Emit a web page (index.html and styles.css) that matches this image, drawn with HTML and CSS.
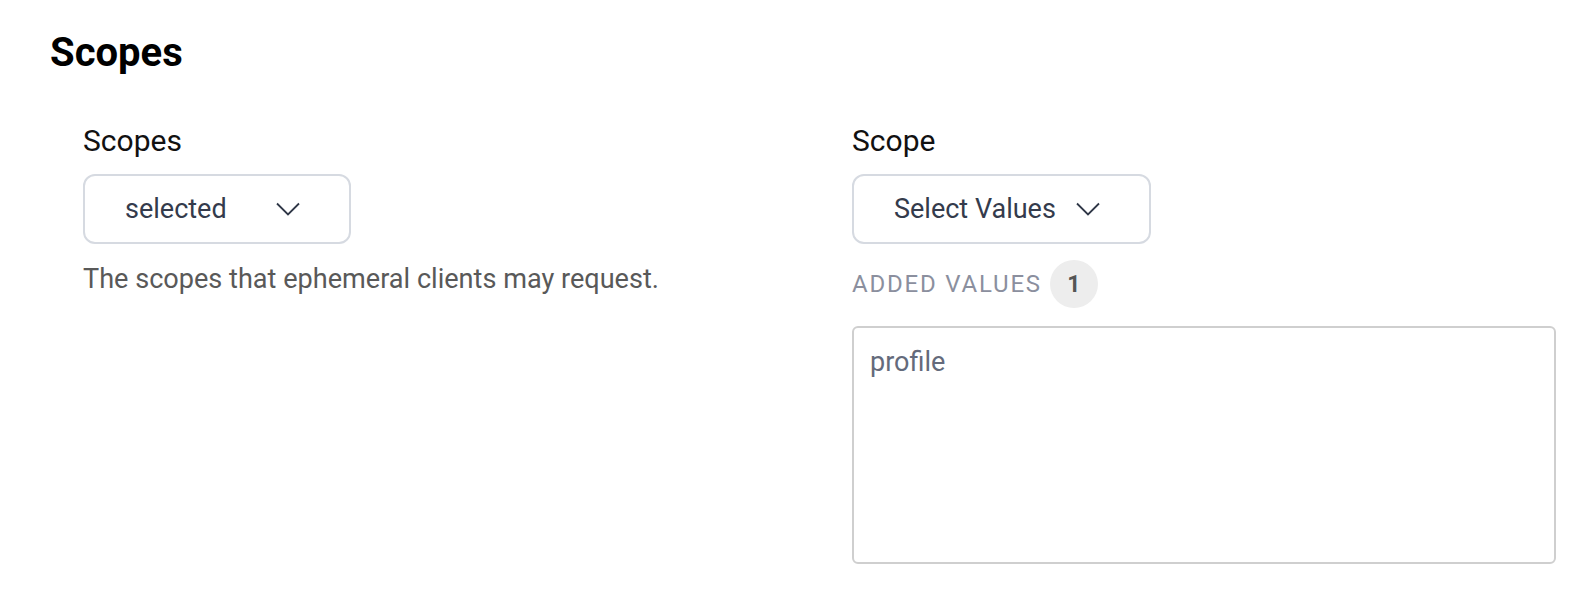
FILE: index.html
```html
<!DOCTYPE html>
<html>
<head>
	<title>Scopes</title>
	<meta charset="utf-8">
	<meta name="viewport" content="width=device-width, initial-scale=1">
	<link rel="stylesheet" href="styles.css">
</head>
<body>
	<div class="page">
		<h2 class="sectionTitle">Scopes</h2>
		<div class="formGrid">
			<div class="field">
				<label class="fieldLabel">Scopes</label>
				<button class="dropdown" type="button">
					<span class="dropdownText">selected</span>
					<svg class="chevron" viewBox="0 0 24 14" xmlns="http://www.w3.org/2000/svg">
						<polyline points="1 1.5 12 12.5 23 1.5" fill="none" stroke="#2f3747" stroke-width="1.8" />
					</svg>
				</button>
				<p class="helpText">The scopes that ephemeral clients may request.</p>
			</div>
			<div class="field">
				<label class="fieldLabel">Scope</label>
				<button class="dropdown" type="button">
					<span class="dropdownText">Select Values</span>
					<svg class="chevron" viewBox="0 0 24 14" xmlns="http://www.w3.org/2000/svg">
						<polyline points="1 1.5 12 12.5 23 1.5" fill="none" stroke="#2f3747" stroke-width="1.8" />
					</svg>
				</button>
				<div class="addedHeader">
					<span class="addedLabel">Added values</span>
					<span class="countBadge">1</span>
				</div>
				<div class="valueList">
					<div class="valueItem">profile</div>
				</div>
			</div>
		</div>
	</div>
</body>
</html>
```

FILE: styles.css
```css
body {
	margin: 0;
	padding: 0;
	background: #fff;
	font-family: Roboto, "Liberation Sans", sans-serif;
	color: #111;
}

.page {
	padding: 28px 31px 0 50px;
}

.sectionTitle {
	margin: 0;
	font-size: 40px;
	line-height: 50px;
	font-weight: 700;
	color: #000;
}

.formGrid {
	display: grid;
	grid-template-columns: 704px 704px;
	column-gap: 65px;
	margin: 46px 0 0 33px;
}

.field {
	display: flex;
	flex-direction: column;
	align-items: flex-start;
}

.fieldLabel {
	font-size: 30px;
	line-height: 34px;
	color: #111;
}

.dropdown {
	display: flex;
	align-items: center;
	gap: 20px;
	height: 70px;
	margin-top: 16px;
	padding: 0 49px 0 40px;
	border: 2px solid #d6dae1;
	border-radius: 12px;
	background: #fff;
	font-family: inherit;
	font-size: 27px;
	color: #343b4c;
	cursor: pointer;
}

.dropdownText {
	min-width: 131px;
	text-align: left;
}

.chevron {
	width: 24px;
	height: 14px;
	flex: none;
}

.helpText {
	margin: 18px 0 0;
	font-size: 27.1px;
	line-height: 34px;
	color: #595959;
}

.addedHeader {
	display: flex;
	align-items: center;
	gap: 8px;
	margin-top: 16px;
}

.addedLabel {
	font-size: 24px;
	letter-spacing: 1.8px;
	text-transform: uppercase;
	color: #8b8f9e;
}

.countBadge {
	display: flex;
	align-items: center;
	justify-content: center;
	width: 48px;
	height: 48px;
	border-radius: 50%;
	background: #ededed;
	font-size: 23px;
	font-weight: 700;
	color: #555;
}

.valueList {
	box-sizing: border-box;
	width: 704px;
	height: 238px;
	margin-top: 18px;
	padding: 17px 16px;
	border: 2px solid #cfcfcf;
	border-radius: 6px;
}

.valueItem {
	font-size: 27px;
	line-height: 34px;
	color: #646a7b;
}
```
